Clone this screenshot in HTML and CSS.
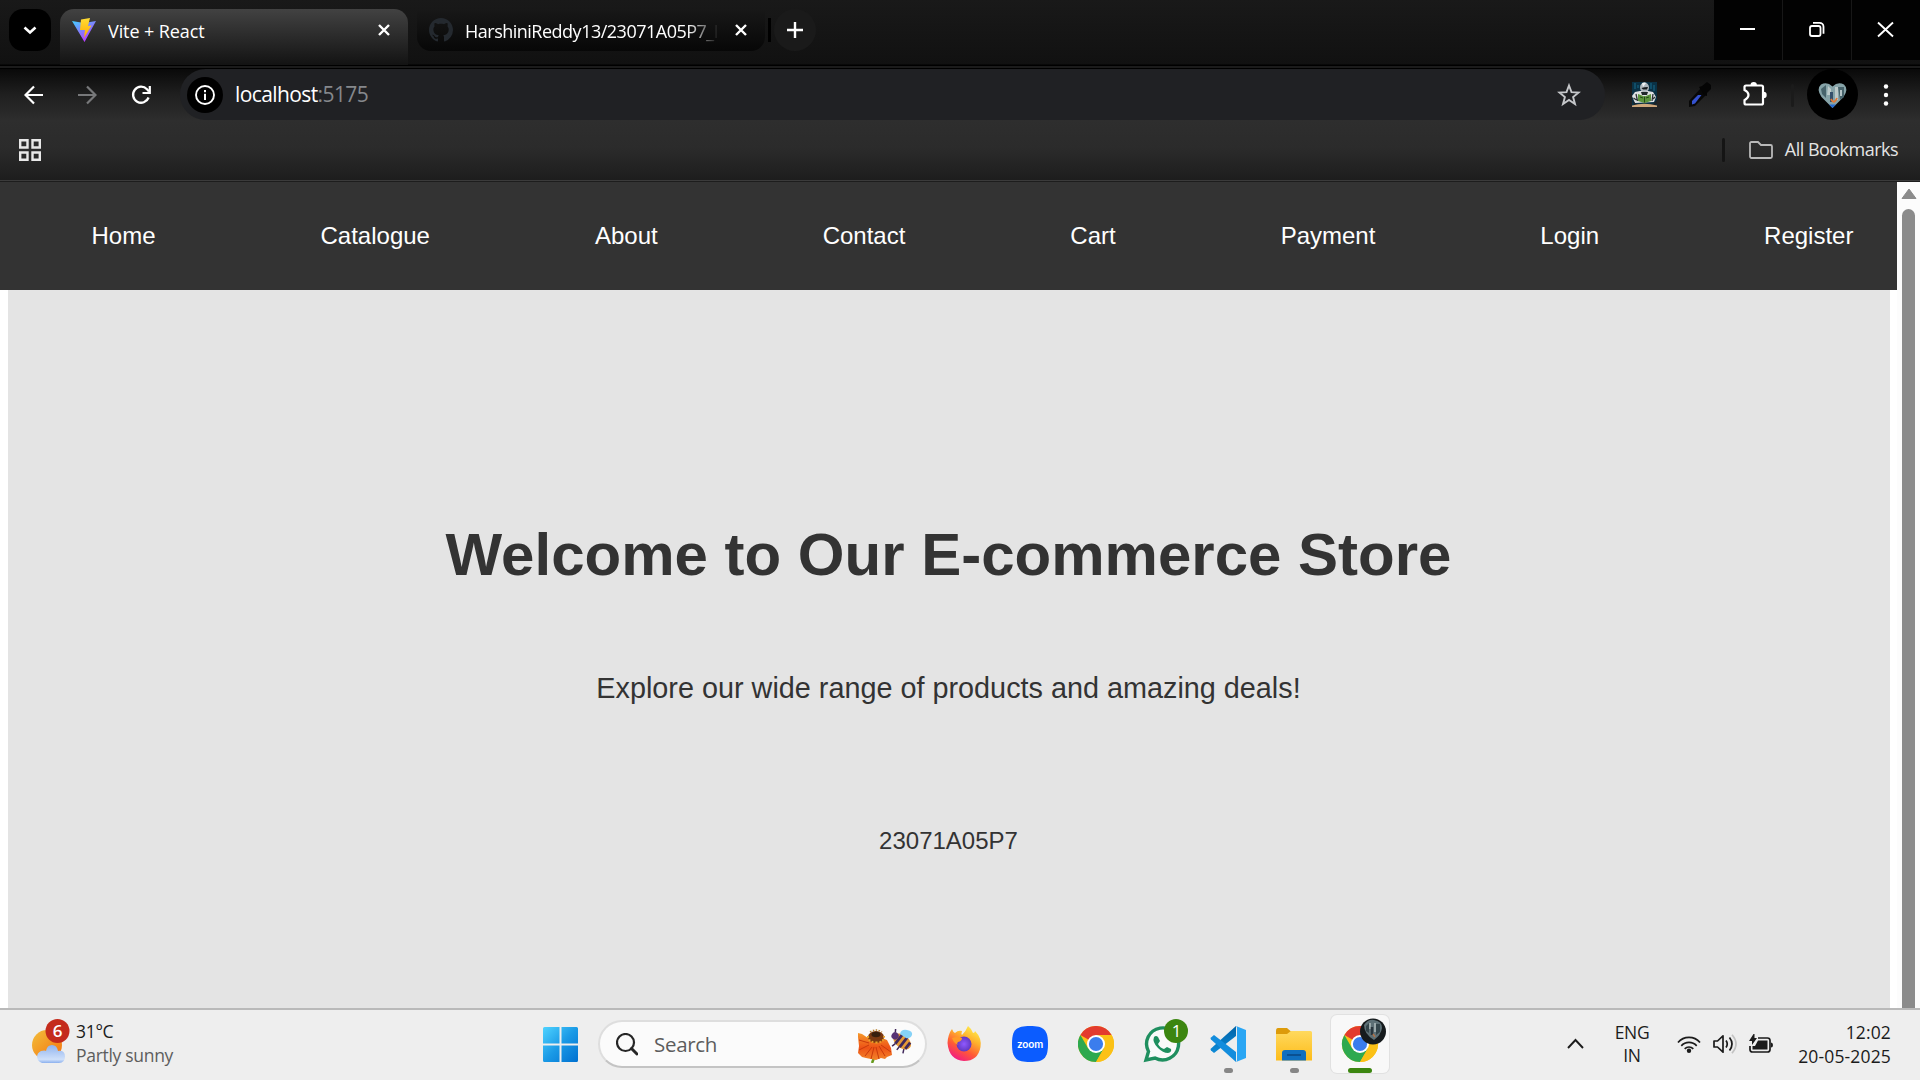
FILE: index.html
```html
<!DOCTYPE html>
<html lang="en">
<head>
<meta charset="utf-8">
<title>Vite + React</title>
<link rel="stylesheet" href="styles.css">
</head>
<body>
<svg class="defs" width="0" height="0">
  <defs>
    <linearGradient id="viteA" x1="0" y1="0" x2=".6" y2="1"><stop offset="0" stop-color="#41d1ff"/><stop offset="1" stop-color="#bd34fe"/></linearGradient>
    <linearGradient id="viteB" x1="0" y1="0" x2="0" y2="1"><stop offset="0" stop-color="#ffdd35"/><stop offset="1" stop-color="#ffa800"/></linearGradient>
    <linearGradient id="sun" x1="0" y1="0" x2="1" y2="1"><stop offset="0" stop-color="#f2bf3c"/><stop offset="1" stop-color="#f5700c"/></linearGradient>
    <linearGradient id="cloud" x1="0" y1="0" x2="0" y2="1"><stop offset="0" stop-color="#8fb3ee"/><stop offset=".8" stop-color="#cfe0fa"/><stop offset="1" stop-color="#8bb0ee"/></linearGradient>
    <linearGradient id="win" gradientUnits="userSpaceOnUse" x1="0" y1="0" x2="35" y2="35"><stop offset="0" stop-color="#4fd3ff"/><stop offset=".5" stop-color="#1a9ae6"/><stop offset="1" stop-color="#0070d0"/></linearGradient>
    <linearGradient id="fox" x1=".8" y1="0" x2=".25" y2="1"><stop offset="0" stop-color="#fff44f"/><stop offset=".35" stop-color="#ffb02c"/><stop offset=".65" stop-color="#ff5a36"/><stop offset="1" stop-color="#f0148c"/></linearGradient>
    <radialGradient id="foxGlobe"><stop offset="0" stop-color="#9059ff"/><stop offset="1" stop-color="#6138c0"/></radialGradient>
    <linearGradient id="petal" x1="0" y1="0" x2="0" y2="1"><stop offset="0" stop-color="#f59a2c"/><stop offset=".55" stop-color="#ee5216"/><stop offset="1" stop-color="#f2852a"/></linearGradient>
    <linearGradient id="folder" x1="0" y1="0" x2="0" y2="1"><stop offset="0" stop-color="#ffd95e"/><stop offset="1" stop-color="#fdbc1a"/></linearGradient>
    <linearGradient id="code" x1="0" y1="0" x2="0" y2="1"><stop offset="0" stop-color="#0062a6"/><stop offset="1" stop-color="#0d8bd8"/></linearGradient>
    <g id="chrome">
      <circle cx="18" cy="18" r="18" fill="#fbc116"/>
      <path d="M18 18 2.4 9A18 18 0 0 1 33.6 9Z" fill="#e33b2e"/>
      <path d="M2.4 9A18 18 0 0 0 18 36L25.8 22.5 10.2 22.5Z" fill="#2da94f"/>
      <path d="M18 9H33.6A18 18 0 0 1 18 36L25.8 22.5Z" fill="#fbc116"/>
      <circle cx="18" cy="18" r="9" fill="#fff"/>
      <circle cx="18" cy="18" r="7.1" fill="#3b7ded"/>
    </g>
  </defs>
</svg>
<div class="screen">
  <header class="browser">
    <div class="tabstrip">
      <button class="tab-search"><svg width="42" height="42"><path d="M15.500 18.500l5.500 5 5.500-5" fill="none" stroke="#fff" stroke-width="2.6"/></svg></button>
      <div class="tab tab-active">
        <svg class="favicon" width="24" height="24" viewBox="0 0 24 24"><path d="M0 3 12 5 24 3 12.5 24Z" fill="url(#viteA)"/><path d="M9 1.5 18 0 16 8l3.500-.5L12 20l1-8H8Z" fill="url(#viteB)"/></svg>
        <span class="tab-title title-vite">Vite + React</span>
        <svg class="tab-close" width="12" height="12"><path d="M1 1 11 11M11 1 1 11" stroke="#fff" stroke-width="2.4"/></svg>
      </div>
      <div class="tab tab-idle">
        <svg class="favicon" width="24" height="24" viewBox="0 0 16 16"><path fill="#24292f" d="M8 0C3.580 0 0 3.580 0 8c0 3.540 2.290 6.530 5.470 7.590.4.070.55-.17.55-.38 0-.19-.01-.82-.01-1.490-2.010.37-2.530-.49-2.690-.94-.09-.23-.48-.94-.82-1.130-.28-.15-.68-.52-.01-.53.63-.01 1.080.58 1.230.82.72 1.210 1.870.87 2.330.66.070-.52.28-.87.51-1.070-1.780-.2-3.640-.89-3.640-3.950 0-.87.31-1.590.82-2.150-.08-.2-.36-1.020.080-2.120 0 0 .67-.21 2.200.82.64-.18 1.320-.27 2-.27s1.360.09 2 .27c1.530-1.040 2.200-.82 2.200-.82.44 1.100.16 1.920.080 2.120.51.56.82 1.270.82 2.150 0 3.070-1.870 3.750-3.650 3.950.29.25.54.73.54 1.480 0 1.070-.01 1.930-.01 2.200 0 .21.15.46.55.38A8 8 0 0 0 16 8c0-4.420-3.580-8-8-8Z"/></svg>
        <span class="tab-title title-git">HarshiniReddy13/23071A05P7_I</span>
        <svg class="tab-close" width="12" height="12"><path d="M1 1 11 11M11 1 1 11" stroke="#fff" stroke-width="2.4"/></svg>
      </div>
      <i class="tab-divider"></i>
      <button class="new-tab"><svg width="42" height="42"><path d="M13 21H29M21 13V29" stroke="#fff" stroke-width="2.4"/></svg></button>
      <div class="window-controls">
        <svg width="68" height="60"><path d="M26 29H41" stroke="#fff" stroke-width="2"/></svg>
        <svg width="68" height="60"><g fill="none" stroke="#fff" stroke-width="1.8"><rect x="27" y="26" width="10.500" height="10" rx="2"/><path d="M30 22.800h6.500a4 4 0 0 1 4 4v7"/></g></svg>
        <svg width="68" height="60"><path d="M26 22.500 41 36.500M41 22.500 26 36.500" stroke="#fff" stroke-width="1.9"/></svg>
      </div>
    </div>
    <div class="toolbar">
      <svg class="back" width="20" height="20"><path d="M19 10H2M10 1.500 1.500 10 10 18.500" fill="none" stroke="#fff" stroke-width="2.200"/></svg>
      <svg class="forward" width="20" height="20"><path d="M1 10H18M10 1.500 18.500 10 10 18.500" fill="none" stroke="#77787a" stroke-width="2.200"/></svg>
      <svg class="reload" width="20" height="20"><path d="M17.600 12.500A8 8 0 1 1 16 4.300L18 6.500" fill="none" stroke="#fff" stroke-width="2.300"/><path d="M18.800 1V8H11.500" fill="none" stroke="#fff" stroke-width="2.200"/></svg>
      <div class="address">
        <svg width="36" height="36"><circle cx="18" cy="18" r="18"/><circle cx="18" cy="18" r="9" fill="none" stroke="#fff" stroke-width="1.900"/><path d="M18 16.700V23M18 13V15.200" stroke="#fff" stroke-width="2"/></svg>
        <span class="url">localhost<span class="port">:5175</span></span>
        <svg class="star" width="24" height="24" viewBox="0 0 24 24"><path d="M12 2.500l2.500 6.700 7.200.3-5.600 4.500 1.900 7L12 17l-6 4 1.900-7-5.600-4.500 7.200-.3Z" fill="none" stroke="#c5c7ca" stroke-width="1.900"/></svg>
      </div>
      <svg class="ext-robot" width="25" height="25"><path fill="#0a3145" d="M0 0H25V25H0Z"/><path d="M3 1v6M6 3v3M19 1v6M22 3v6" stroke="#176b8b"/><path d="M0 14l3-4 5-1h8l5 1 3 5-2 5-19 1Z" fill="#dfe1e3"/><path d="M0 18l4 4h17l4-4v4l-3 2H3Z" fill="#1c2226"/><ellipse cx="12.500" cy="5.500" rx="4.500" ry="5" fill="#aeb6bc"/><path d="M10 1q3-1 4 0l-3 4Z" fill="#f2f3f4"/><path d="M9.500 6q3-1 6.500-1l-1 2.500h-4Z" fill="#15191c"/><path d="M9 10h7l-1 3h-5Z" fill="#20272b"/><path d="M4 12l1.500 7M21 12l-1 7M1.500 16l3 2M23 15l-2 2" stroke="#2c3236" stroke-width="1.300"/><path d="M6 12l6.500 2.500 6.500-2.500v7l-6.500 2L6 19Z" fill="#5b943c"/><path d="M12.500 14.500v6M8 15l3 1M17 15l-3 1" stroke="#24491a"/><path d="M0 23.500Q12 20 25 23.500V25H0Z" fill="#cea77b"/></svg>
      <svg class="ext-picker" width="24" height="26"><path d="M1 25V19L13 6l6 6L7 24Z" fill="#080808"/><path d="M11 5l3-1 5-4 4 3v4l-4 4v3l-3-1Z" fill="#050505"/><path d="M4 22.500v-3.500l6-6h3.500l-6.500 8.500Z" fill="#3552cf"/></svg>
      <svg class="ext-puzzle" width="26" height="26"><path d="M4 3.500H19.500Q21 3.500 21 5V21Q21 22.500 19.500 22.500H4Q2.500 22.500 2.500 21V18.200Q6.500 16 6.500 13T2.500 8V5Q2.500 3.500 4 3.500Z" fill="none" stroke="#fff" stroke-width="2.200"/><path d="M8.500 3.200a3.200 3.200 0 0 1 6.400 0ZM21.500 9.800a3.200 3.200 0 0 1 0 6.400Z" fill="#fff"/></svg>
      <i class="toolbar-divider"></i>
      <svg class="profile" width="51" height="51"><circle cx="25.500" cy="25.500" r="25.500"/><path d="M25.500 39 14.500 28Q9 20 14 15.500 20 12 25.500 17.500 31 12 37 15.500 42 20 36.500 28Z" fill="#86a3a8"/><path d="M14 20l5-4v13l-4-4ZM31 18h6v10l-4 3Z" fill="#47636b"/><path d="M21 17l3 3v6h-4ZM28 18h3v13h-3Z" fill="#bccaca"/><path d="M34 21v6" stroke="#b4c4c6" stroke-width="2"/><path d="M24.500 23v10" stroke="#34506b" stroke-width="3"/><path d="M24 30q3 6 6-1" stroke="#e37835" stroke-width="1.800" fill="none"/><path d="M22 35.500h7l-3.500 3.500Z" fill="#2568ce"/></svg>
      <svg width="6" height="22"><g fill="#fff"><circle cx="3" cy="2.500" r="2.200"/><circle cx="3" cy="11" r="2.200"/><circle cx="3" cy="19.500" r="2.200"/></g></svg>
    </div>
    <div class="bookmarks">
      <svg width="22" height="22"><g fill="none" stroke="#e8e8e8" stroke-width="2.400"><path d="M1.200 1.200h7.300v7.300H1.200ZM13.500 1.200h7.300v7.300H13.500ZM1.200 13.500h7.300v7.300H1.200ZM13.500 13.500h7.300v7.300H13.500Z"/></g></svg>
      <i class="bookmark-divider"></i>
      <svg width="24" height="18"><path d="M1 15V2.500Q1 1 2.500 1H9l3 3H21.500Q23 4 23 5.500V15.500Q23 17 21.500 17H2.500Q1 17 1 15Z" fill="none" stroke="#b9b9b9" stroke-width="1.800"/></svg>
      <span class="all-bookmarks">All Bookmarks</span>
    </div>
  </header>

  <main class="viewport">
    <div class="page">
      <nav class="site-nav">
        <a>Home</a><a>Catalogue</a><a>About</a><a>Contact</a><a>Cart</a><a>Payment</a><a>Login</a><a>Register</a>
      </nav>
      <section class="hero">
        <h1>Welcome to Our E-commerce Store</h1>
        <p class="tagline">Explore our wide range of products and amazing deals!</p>
        <p class="roll">23071A05P7</p>
      </section>
    </div>
    <div class="scrollbar">
      <svg width="16" height="12"><path d="M8 1 15 10.500H1Z" fill="#8b8b8b" stroke="#8b8b8b" stroke-linejoin="round"/></svg>
      <i class="thumb"></i>
    </div>
  </main>

  <footer class="taskbar">
    <div class="weather">
      <svg width="40" height="46"><circle cx="15" cy="26" r="15" fill="url(#sun)"/><path d="M10 44a7 6.500 0 0 1-1-12q4-1 5 0 1-6 6-6t6 6q7-1 7 5.500T27 44Z" fill="url(#cloud)"/><circle cx="25.500" cy="12" r="12" fill="#c42b1c"/><text x="25.500" y="18" class="badge-text">6</text></svg>
      <div class="weather-text"><span class="temp">31°C</span><span class="sky">Partly sunny</span></div>
    </div>
    <svg class="start" width="35" height="35"><path d="M1.500 0H16.500V16.500H0V1.500Q0 0 1.500 0ZM18.500 0h15Q35 0 35 1.500v15H18.500ZM0 18.500H16.500V35H1.500Q0 35 0 33.500ZM18.500 18.500H35v15q0 1.500-1.500 1.500h-15Z" fill="url(#win)"/></svg>
    <div class="search">
      <svg width="22" height="23"><circle cx="9.500" cy="9.500" r="8.500" fill="none" stroke="#262626" stroke-width="2.200"/><path d="M15.500 15.500 21 21" stroke="#262626" stroke-width="3" stroke-linecap="round"/></svg>
      <span class="search-label">Search</span>
      <svg class="flower" width="56" height="34"><path d="M16 24q2 4-1 10" stroke="#689b1e" stroke-width="2.500" fill="none"/><path d="M1 4l4 1 6 4 14 0 5 2 4 8 1 7-5 2-2 2-4-1-5 2-5-1-5-1-4-1-4-4 1-7-1-9Z" fill="url(#petal)"/><path d="M2 11l10 3M2 21l10-5M8 27l7-9M14 30l3-12M22 30l-3-12M28 27l-6-10M34 23l-10-7" stroke="#c93a0c" stroke-width="1"/><ellipse cx="19" cy="8" rx="8" ry="6" fill="#7b3a12"/><path d="M11 7q0 6 8 6.500T27 7" fill="none" stroke="#e7a329" stroke-width="2" stroke-dasharray="1.800 1.800"/><path d="M13 3q6-4 12 0" fill="none" stroke="#b9812c" stroke-width="1.500" stroke-dasharray="1.500 1.500"/><ellipse cx="19" cy="5.500" rx="4.500" ry="2.800" fill="#37200e"/><g transform="rotate(38 45 11)"><ellipse cx="46" cy="12" rx="10" ry="6.500" fill="#e69a36"/><path d="M42 6v12M47.500 6v12M53 8v8" stroke="#40285b" stroke-width="2.800"/><circle cx="37" cy="12" r="3.600" fill="#573375"/><path d="M42 18l-1 4M47 18v4M52 17l2 4M35 9l-2-3" stroke="#40285b" stroke-width="1.500"/></g><path d="M43 5q1-5 7-4 6 1 5 5-2 4-6 3Z" fill="#86d2f7"/></svg>
    </div>
    <div class="apps">
      <div class="app"><svg width="36" height="36"><path d="M1.500 17Q2 8 6 3q1 3 3 4 3-3 7-2-1 3 0 4 4-4 6-9 4 3 5 7 2 0 2-2Q36 12 34.500 21 32 35 18 35 3 34 1.500 17Z" fill="url(#fox)"/><circle cx="18" cy="18" r="7.500" fill="url(#foxGlobe)"/><path d="M6 12q6-2 10 0 0 3-4 4-2 2 1 3-5-1-7-7Z" fill="#ff9a26"/></svg></div>
      <div class="app"><svg width="36" height="36"><path d="M0 18C0 4 4 0 18 0s18 4 18 18-4 18-18 18S0 32 0 18Z" fill="#0b5cff"/><text x="18" y="21.500" class="zoom-text" textLength="26">zoom</text></svg></div>
      <div class="app"><svg width="36" height="36"><use href="#chrome"/></svg></div>
      <div class="app"><svg class="spill" width="36" height="36"><path d="M2 34 4.500 25.500A16 16 0 1 1 11 32Z" fill="#fafafa" stroke="#1f8f5f" stroke-width="3.400"/><path d="M10 11q2-2 4 0l2 4-2 3q2 4 6 5l3-2 4 2q1 3-3 4-5 0-10-5-6-6-4-11Z" fill="#1f8f5f"/><circle cx="32" cy="5" r="12" fill="#3c8610"/><text x="32.500" y="11" class="badge-text badge-light">1</text></svg></div>
      <div class="app running"><svg width="36" height="36"><path d="M26 0V10L4 27 1 24.500Q0 23.500 1 22.500Z" fill="url(#code)"/><path d="M26 36V26L4 9 1 11.500Q0 12.500 1 13.500Z" fill="#138ddd"/><path d="M26 0 36 4V32L26 36Q27 35 27 34V2Q27 1 26 0Z" fill="#2aa6f4"/></svg></div>
      <div class="app running"><svg width="36" height="36"><path d="M0 5Q0 2 2 2H11l4 3.500H34V12H0Z" fill="#dd9b0a"/><path d="M0 8H11l4-3H34.500Q36 5 36 6.500V34.500H0Z" fill="url(#folder)"/><path d="M6 34.500V27q0-3 3-3H27q3 0 3 3v7.500Z" fill="#0f6fbf"/><path d="M11 29H25" stroke="#0a4a86" stroke-width="1.600"/></svg></div>
      <div class="app current"><svg class="spill" width="36" height="36"><use href="#chrome"/><circle cx="31" cy="5.500" r="13" fill="#161b1d"/><path d="M22-1q4-6 10-5 8 1 8 8-1 7-8 12Q22 8 22-1Z" fill="#5d7076"/><path d="M24 0l3-3v10l-3-2ZM34-2h4v8l-4 3Z" fill="#33454b"/><path d="M28-3v6M33-3v9" stroke="#9aa8aa" stroke-width="2"/><path d="M30 1v8" stroke="#29363e" stroke-width="2.500"/><path d="M31 8l2 3" stroke="#b27147" stroke-width="1.500"/></svg></div>
    </div>
    <div class="tray">
      <svg width="17" height="11"><path d="M1 10 8.500 2 16 10" fill="none" stroke="#1b1b1b" stroke-width="1.900"/></svg>
      <div class="lang"><span>ENG</span><span>IN</span></div>
      <svg class="wifi" width="24" height="18"><g fill="none" stroke="#1b1b1b" stroke-width="1.700"><path d="M1 7.500A14.500 14.500 0 0 1 23 7.500M4.300 10.800A10.500 10.500 0 0 1 19.700 10.800M7.700 13.800A6 6 0 0 1 16.300 13.800"/></g><circle cx="12" cy="15.700" r="2.200" fill="#1b1b1b"/></svg>
      <svg class="speaker" width="25" height="20"><path d="M1 7H4.500L10 1.800V18.200L4.500 13H1Z" fill="none" stroke="#1b1b1b" stroke-width="1.700" stroke-linejoin="round"/><path d="M13 6.500q2.500 3.500 0 7M16.500 3.500q5 6.500 0 13" fill="none" stroke="#1b1b1b" stroke-width="1.700"/><path d="M19 .8q8 9.200 0 18.400" fill="none" stroke="#c3c3c3" stroke-width="1.700"/></svg>
      <svg class="battery" width="24" height="19"><path d="M9 4H18.500Q21 4 21 6.500v9q0 2.500-2.500 2.500H3.500Q1 18 1 15.500V12" fill="none" stroke="#1b1b1b" stroke-width="1.700"/><path d="M9 6.500h9.500v9H3.500V12H6Z" fill="#1b1b1b"/><path d="M4.500 0H5.500V4H8L3 11V7H0Z" fill="#1b1b1b"/><path d="M22 8.500q2 0 2 2.500t-2 2.500Z" fill="#1b1b1b"/></svg>
      <div class="clock"><span class="time">12:02</span><span class="date">20-05-2025</span></div>
    </div>
  </footer>
</div>
</body>
</html>
```
FILE: styles.css
```css
* { box-sizing: border-box; }
html, body { margin: 0; }
body { width: 1920px; height: 1080px; overflow: hidden; font-family: "Open Sans", "Noto Sans", sans-serif; }
svg { display: block; flex: none; }
button { padding: 0; border: 0; }
.defs { position: absolute; }
.screen { height: 1080px; display: flex; flex-direction: column; }

/* Browser chrome */
.browser { height: 182px; color: #fff; background: #2e2e2e; }
.tabstrip {
  height: 69px; display: flex; align-items: flex-start; padding: 9px 0 0 9px;
  background: linear-gradient(#191919 0, #111 64px, #000 65px, #000 66px, #1b1b1b 66px, #1b1b1b 68px, #000 68px);
}
.tab-search { width: 42px; height: 42px; border-radius: 14px; background: #000; margin-right: 9px; }
.tab { display: flex; align-items: center; width: 348px; padding: 0 18px 0 12px; }
.tab-active { height: 56px; padding-bottom: 14px; border-radius: 14px 14px 0 0; background: linear-gradient(#424242, #131313); }
.tab-idle { height: 42px; margin-left: 9px; border-radius: 0 0 14px 14px; background: linear-gradient(#181818, #070707); }
.favicon { margin-right: 12px; }
.tab-title { height: 24px; line-height: 26px; font-size: 18px; white-space: nowrap; overflow: hidden; }
.title-vite { width: 200px; letter-spacing: -0.1px; }
.title-git { width: 252px; letter-spacing: -0.5px; -webkit-mask-image: linear-gradient(90deg, #000 222px, transparent 254px); mask-image: linear-gradient(90deg, #000 222px, transparent 254px); }
.tab-close { margin-left: auto; }
.tab-divider { width: 3px; height: 24px; margin: 9px 3px 0; background: #000; }
.new-tab { width: 42px; height: 42px; border-radius: 21px; background: #1a1a1a; }
.window-controls { display: flex; gap: 1px; margin: -9px 0 0 auto; background: #171717; }
.window-controls svg { background: #020202; }

.toolbar {
  height: 51px; display: flex; align-items: center; padding-left: 23.500px;
  background: linear-gradient(#090909, #1f1f1f 50%, #2d2d2d);
}
.forward { margin-left: 33px; }
.reload { margin-left: 34px; }
.address { width: 1425px; height: 51px; margin-left: 29.500px; border-radius: 26px; background: #202124; display: flex; align-items: center; padding: 0 24px 0 7px; }
.url { margin: -2px 0 0 12px; font-size: 21px; letter-spacing: -0.6px; }
.port { color: #85888c; }
.star { margin-left: auto; }
.ext-robot { margin-left: 27px; }
.ext-picker { margin-left: 31px; }
.ext-puzzle { margin-left: 30px; }
.toolbar-divider { width: 3px; height: 23px; margin: 2px 13px 0 23px; background: #1b1b1b; border-radius: 2px; }
.profile { margin-right: 25px; }

.bookmarks {
  height: 62px; display: flex; align-items: center; padding: 0 22px 2px 19px;
  background: linear-gradient(#2e2e2e, #2b2b2b 45%, #1d1d1d 60px, #3b3b3b 60px, #3b3b3b 61px, #1d1d1d 61px);
}
.bookmark-divider { width: 3px; height: 24px; margin: 0 24px 0 auto; background: #151515; border-radius: 2px; }
.all-bookmarks { margin: -2px 0 0 12px; font-size: 18px; letter-spacing: -0.52px; color: #e4e4e4; white-space: nowrap; }

/* Web page */
.viewport { height: 826px; display: flex; background: #fff; font-family: "Liberation Sans", Arial, sans-serif; }
.page { width: 1897px; }
.site-nav { height: 108px; background: #333; color: #fff; display: flex; justify-content: space-between; align-items: center; padding: 0 43.500px 0 91.500px; font-size: 24px; }
.hero { height: 718px; margin: 0 7px 0 8px; padding: 231px 1px 0 0; background: #e4e4e4; color: #333; text-align: center; }
.hero h1 { margin: 0; font-size: 60px; line-height: 68px; }
.hero p { margin: 0; }
.hero .tagline { margin-top: 83px; font-size: 28.800px; line-height: 33px; }
.hero .roll { margin-top: 122px; font-size: 24px; line-height: 27px; }
.scrollbar { width: 23px; padding-top: 6px; display: flex; flex-direction: column; align-items: center; background: #fcfcfc; }
.thumb { width: 13px; flex: 1; margin-top: 9px; border-radius: 7px 7px 0 0; background: #8b8b8b; }

/* Taskbar */
.taskbar { height: 72px; display: flex; align-items: center; border-top: 2px solid #b9b9b9; background: #eee; color: #1b1b1b; font-size: 17.500px; letter-spacing: -0.3px; }
.weather { display: flex; width: 543px; padding: 0 0 5px 32px; }
.weather-text { display: flex; flex-direction: column; margin-left: 4px; line-height: 24px; }
.sky { color: #5d5d5d; }
.badge-text { font-size: 17px; fill: #fff; text-anchor: middle; font-weight: 600; }
.badge-light { font-weight: 400; }
.start { margin-top: -1px; }
.search { width: 329px; height: 48px; margin: -2px 0 0 20px; border: 2px solid #dedede; border-bottom-color: #c4c4c4; border-radius: 24px; background: #fbfbfb; display: flex; align-items: center; padding: 0 12px 0 16px; }
.search-label { margin-left: 16px; font-size: 20.500px; color: #5d5d5d; }
.flower { margin: 3px 0 0 auto; }
.apps { display: flex; gap: 8px; margin: -2px 0 0 8px; }
.app { width: 58px; height: 58px; padding-top: 11px; display: flex; flex-direction: column; align-items: center; justify-content: space-between; }
.spill { overflow: visible; }
.running::after { content: ""; width: 9px; height: 5px; border-radius: 3px; background: #868686; }
.current { background: #f8f8f8; border-radius: 6px; box-shadow: 0 0 0 1px #e1e1e1; }
.current::after { content: ""; width: 24px; height: 5px; border-radius: 3px; background: #3c8610; }
.zoom-text { font: 600 10px "Inter", sans-serif; fill: #fff; text-anchor: middle; }
.tray { margin-left: auto; padding: 0 29px 3px 0; display: flex; align-items: center; }
.lang { display: flex; flex-direction: column; align-items: center; width: 36px; margin: 0 27px 0 30px; line-height: 23px; }
.speaker { margin-left: 12px; }
.battery { margin-left: 11px; }
.clock { width: 118px; display: flex; flex-direction: column; align-items: flex-end; line-height: 24px; letter-spacing: 0.15px; }
```
